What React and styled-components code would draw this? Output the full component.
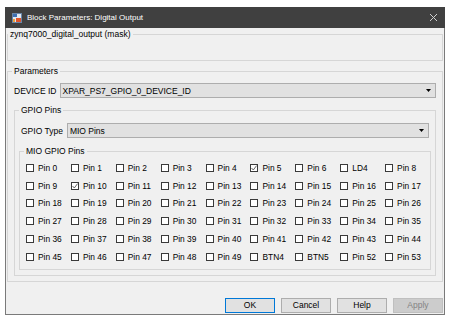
import React from 'react';
import styled, { createGlobalStyle } from 'styled-components';

const Global = createGlobalStyle`
  html, body { margin: 0; padding: 0; background: #ffffff; }
  body { font-family: "Liberation Sans", Arial, sans-serif; color: #000; }
`;

const Page = styled.div`
  padding: 7px 0 0 5px;
`;

const Window = styled.div`
  width: 440px;
  box-sizing: border-box;
  border: 1px solid #7a7a7a;
  border-top: none;
  background: #f0f0f0;
`;

const TitleBar = styled.div`
  height: 21px;
  margin: 0 -1px;
  background: #404040;
  display: flex;
  align-items: center;
  gap: 5px;
  padding: 0 7px;
  color: #ffffff;
  font-size: 8px;
`;

const TitleText = styled.span`
  flex: 1;
  white-space: nowrap;
`;

const Body = styled.div`
  padding: 1px 1px 1px 1px;
`;

const Group = styled.fieldset`
  margin: ${p => p.$margin || '0'};
  padding: ${p => p.$pad || '0'};
  border: 1px solid #d6d6d6;
  min-width: 0;
`;

const Legend = styled.legend`
  padding: 0 2px;
  margin-left: -2px;
  font-size: 8.5px;
  line-height: 10px;
`;

const Spacer = styled.div`
  height: ${p => p.$h}px;
`;

const Row = styled.div`
  display: flex;
  align-items: center;
  gap: ${p => p.$gap}px;
  height: 15px;
  font-size: 8.5px;
`;

const Combo = styled.div`
  flex: 1;
  height: 15px;
  box-sizing: border-box;
  border: 1px solid #adadad;
  background: #e1e1e1;
  display: flex;
  align-items: center;
  padding: 0 4px 0 2px;
  font-size: 8.5px;
`;

const ComboText = styled.span`
  flex: 1;
`;

const PinGrid = styled.div`
  display: grid;
  grid-template-columns: repeat(9, 1fr);
  grid-auto-rows: 17.8px;
`;

const Cell = styled.label`
  display: flex;
  align-items: center;
  gap: 4px;
  font-size: 8.4px;
  white-space: nowrap;
`;

const Box = styled.span`
  width: 8px;
  height: 8px;
  box-sizing: border-box;
  border: 1px solid #3a3a3a;
  background: #ffffff;
  display: flex;
  align-items: center;
  justify-content: center;
`;

const Buttons = styled.div`
  display: flex;
  justify-content: flex-end;
  gap: 6px;
  margin-top: 16px;
`;

const Button = styled.button`
  width: 50px;
  height: 15px;
  box-sizing: border-box;
  padding: 0;
  font-family: "Liberation Sans", Arial, sans-serif;
  font-size: 8.5px;
  border: 1px solid ${p => (p.$primary ? '#0078d7' : p.disabled ? '#bfbfbf' : '#adadad')};
  background: ${p => (p.disabled ? '#cccccc' : '#e1e1e1')};
  color: ${p => (p.disabled ? '#838383' : '#000000')};
`;

const Arrow = () => (
  <svg width="5" height="3" viewBox="0 0 5 3">
    <path d="M0 0 H5 L2.5 3 Z" fill="#000" />
  </svg>
);

const AppIcon = () => (
  <svg width="10" height="10" viewBox="0 0 10 10">
    <rect x="0" y="0" width="10" height="10" fill="#dfe8f3" />
    <rect x="0.5" y="0.5" width="9" height="9" fill="none" stroke="#6a86a8" strokeWidth="1" />
    <rect x="1" y="1" width="4" height="3" fill="#3d6fb0" />
    <rect x="4" y="5" width="5" height="4" fill="#e2542a" />
    <rect x="1" y="6" width="2" height="3" fill="#f2a23a" />
  </svg>
);

const CloseIcon = () => (
  <svg width="9" height="9" viewBox="0 0 9 9">
    <path d="M1 1 L8 8 M8 1 L1 8" stroke="#cfcfcf" strokeWidth="1" />
  </svg>
);

const Check = () => (
  <svg width="6" height="6" viewBox="0 0 6 6">
    <path d="M0.5 3 L2.3 5 L5.6 0.6" fill="none" stroke="#555" strokeWidth="0.9" />
  </svg>
);

const pins = [];
for (let i = 0; i < 54; i++) {
  let name = `Pin ${i}`;
  if (i === 7) name = 'LD4';
  if (i === 50) name = 'BTN4';
  if (i === 51) name = 'BTN5';
  pins.push({ name, checked: i === 5 || i === 10 });
}

export default function App() {
  return (
    <>
      <Global />
      <Page>
        <Window>
          <TitleBar>
            <AppIcon />
            <TitleText>Block Parameters: Digital Output</TitleText>
            <CloseIcon />
          </TitleBar>
          <Body>
            <Group $pad="0 0 0 2px">
              <Legend>zynq7000_digital_output (mask)</Legend>
              <Spacer $h={21} />
            </Group>
            <Group $margin="5px 0 0 0" $pad="7px 6px 5px 6px">
              <Legend>Parameters</Legend>
              <Row $gap={3}>
                <span>DEVICE ID</span>
                <Combo>
                  <ComboText>XPAR_PS7_GPIO_0_DEVICE_ID</ComboText>
                  <Arrow />
                </Combo>
              </Row>
              <Group $margin="7px 0 0 0" $pad="8px 6px 5px 6px">
                <Legend>GPIO Pins</Legend>
                <Row $gap={4}>
                  <span>GPIO Type</span>
                  <Combo>
                    <ComboText>MIO Pins</ComboText>
                    <Arrow />
                  </Combo>
                </Row>
                <Group $margin="8px -2px 0 -2px" $pad="3px 0 3px 6px">
                  <Legend>MIO GPIO Pins</Legend>
                  <PinGrid>
                    {pins.map(p => (
                      <Cell key={p.name}>
                        <Box>{p.checked && <Check />}</Box>
                        <span>{p.name}</span>
                      </Cell>
                    ))}
                  </PinGrid>
                </Group>
              </Group>
            </Group>
            <Buttons>
              <Button $primary>OK</Button>
              <Button>Cancel</Button>
              <Button>Help</Button>
              <Button disabled>Apply</Button>
            </Buttons>
          </Body>
        </Window>
      </Page>
    </>
  );
}
